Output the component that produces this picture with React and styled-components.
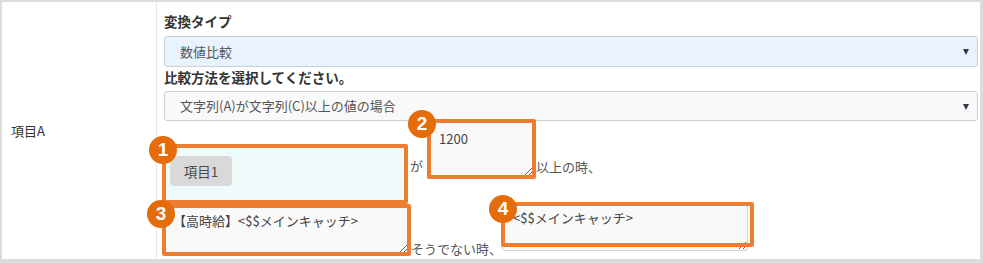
import React from 'react';
import styled, { createGlobalStyle } from 'styled-components';

const GlobalStyle = createGlobalStyle`
  html, body {
    margin: 0;
    padding: 0;
    background: #fff;
  }
  body {
    font-family: "Noto Sans CJK JP", "Noto Sans", sans-serif;
    font-size: 13px;
    color: #333;
  }
`;

const Frame = styled.div`
  width: 983px;
  height: 263px;
  box-sizing: border-box;
  border-style: solid;
  border-color: #dcdcdc;
  border-width: 2px 3px 4px 2px;
  display: flex;
`;

const LabelCell = styled.div`
  width: 155px;
  border-right: 1px solid #e8e8e8;
  display: flex;
  align-items: center;
  padding-left: 9px;
  box-sizing: border-box;
  font-size: 13px;
  color: #333;
`;

const ContentCell = styled.div`
  flex: 1;
  padding: 9px 2px 0 7px;
  display: flex;
  flex-direction: column;
`;

const Heading = styled.div`
  font-weight: 700;
  font-size: 13.5px;
  line-height: 20px;
  color: #333;
`;

const Select = styled.div`
  margin-top: ${(p) => p.$gap}px;
  height: 31px;
  box-sizing: border-box;
  border: 1px solid #cfcfcf;
  border-radius: 3px;
  background: ${(p) => p.$bg};
  display: flex;
  align-items: center;
  justify-content: space-between;
  padding: 0 8px 0 15px;
  color: #555;
  font-size: 13px;
`;

const Caret = styled.span`
  width: 0;
  height: 0;
  border-left: 3.5px solid transparent;
  border-right: 3.5px solid transparent;
  border-top: 6px solid #2f3b48;
  margin-top: 2px;
`;

const Row = styled.div`
  display: flex;
  align-items: flex-start;
  margin-top: ${(p) => p.$top || 0}px;
`;

const Marked = styled.div`
  position: relative;
  margin-top: ${(p) => p.$top || 0}px;
  margin-left: ${(p) => p.$left || 0}px;
  display: flex;
`;

const Outline = styled.div`
  position: absolute;
  inset: ${(p) => p.$inset || '-2px'};
  border: 4px solid #ed7d31;
  border-radius: 2px;
  pointer-events: none;
`;

const Badge = styled.div`
  position: absolute;
  left: ${(p) => p.$x}px;
  top: ${(p) => p.$y}px;
  width: 28px;
  height: 28px;
  border-radius: 50%;
  background: #e46c0a;
  color: #fff;
  font-family: "Liberation Sans", Arial, sans-serif;
  font-weight: 700;
  font-size: 19px;
  display: flex;
  align-items: center;
  justify-content: center;
  pointer-events: none;
`;

const DropField = styled.div`
  width: 242px;
  height: 56px;
  box-sizing: border-box;
  background: #effbfb;
  padding: 10px 6px;
`;

const Tag = styled.span`
  display: inline-flex;
  align-items: center;
  justify-content: center;
  width: 62px;
  height: 30px;
  border-radius: 4px;
  background: #d9d9d9;
  color: #4a4a4a;
  font-size: 13.5px;
`;

const Words = styled.span`
  margin-top: ${(p) => p.$top}px;
  margin-left: ${(p) => p.$left || 0}px;
  line-height: 20px;
  color: #555;
  font-size: 13px;
  white-space: nowrap;
`;

const Area = styled.textarea`
  width: ${(p) => p.$w}px;
  height: ${(p) => p.$h}px;
  box-sizing: border-box;
  margin: 0;
  border: 1px solid #d4d4d4;
  border-radius: 3px;
  background: #f9f9f9;
  color: #444;
  font-family: "Noto Sans CJK JP", "Noto Sans", sans-serif;
  font-size: 13px;
  line-height: 18px;
  padding: ${(p) => p.$pad};
  display: block;
  outline: none;
`;

export default function App() {
  return (
    <>
      <GlobalStyle />
      <Frame>
        <LabelCell>項目A</LabelCell>
        <ContentCell>
          <Heading>変換タイプ</Heading>
          <Select $gap={5} $bg="#e8f3fd">
            数値比較
            <Caret />
          </Select>
          <Heading>比較方法を選択してください。</Heading>
          <Select $gap={4} $bg="#f9f9f9">
            文字列(A)が文字列(C)以上の値の場合
            <Caret />
          </Select>

          <Row>
            <Marked $top={25}>
              <DropField>
                <Tag>項目1</Tag>
              </DropField>
              <Outline />
              <Badge $x={-15} $y={-10}>1</Badge>
            </Marked>
            <Words $top={35} $left={4}>が</Words>
            <Marked $left={6}>
              <Area $w={105} $h={56} $pad="8px 9px" readOnly defaultValue="1200" />
              <Outline />
              <Badge $x={-21} $y={-11}>2</Badge>
            </Marked>
            <Words $top={36} $left={2}>以上の時、</Words>
          </Row>

          <Row $top={1}>
            <Marked $top={3}>
              <Area
                $w={245}
                $h={48}
                $pad="5px 8px"
                readOnly
                defaultValue="【高時給】<$$メインキャッチ>"
              />
              <Outline />
              <Badge $x={-17} $y={-6}>3</Badge>
            </Marked>
            <Words $top={36} $left={2}>そうでない時、</Words>
            <Marked $left={0}>
              <Area
                $w={246}
                $h={48}
                $pad="5px 10px"
                readOnly
                defaultValue="<$$メインキャッチ>"
              />
              <Outline $inset="-1px -6px 4px -1px" />
              <Badge $x={-13} $y={-8}>4</Badge>
            </Marked>
          </Row>
        </ContentCell>
      </Frame>
    </>
  );
}
